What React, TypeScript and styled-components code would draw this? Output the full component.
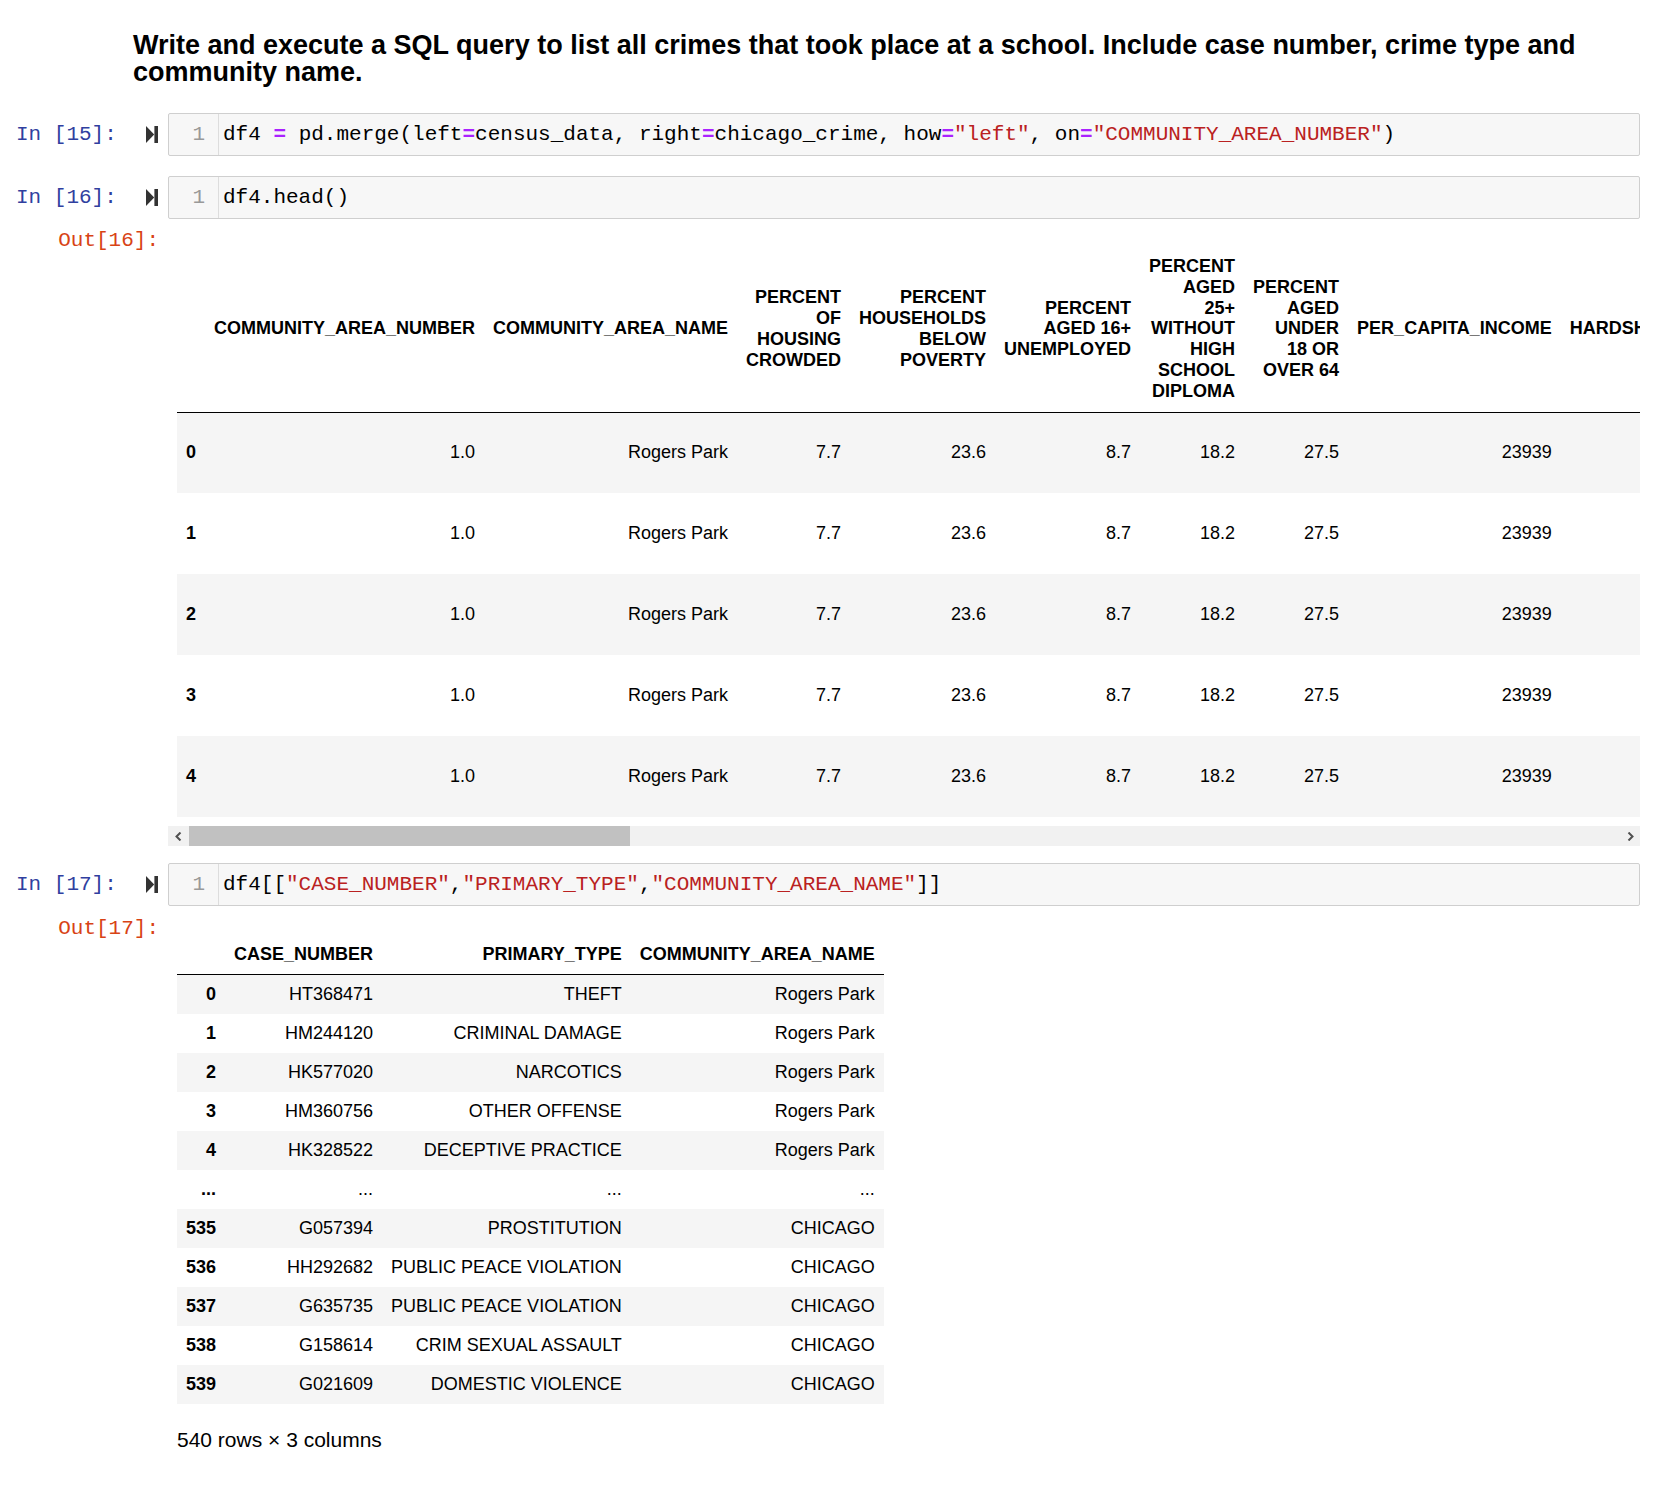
import React from "react";
import styled, { createGlobalStyle } from "styled-components";

const GlobalStyle = createGlobalStyle`
  html, body {
    margin: 0;
    padding: 0;
    background: #ffffff;
  }
  body {
    font-family: "Liberation Sans", Arial, sans-serif;
    color: #000;
  }
`;

type TokKind = "plain" | "op" | "str";
type Tok = { t: string; k?: TokKind };

const cell15: Tok[] = [
  { t: "df4 " },
  { t: "=", k: "op" },
  { t: " pd.merge(left" },
  { t: "=", k: "op" },
  { t: "census_data, right" },
  { t: "=", k: "op" },
  { t: "chicago_crime, how" },
  { t: "=", k: "op" },
  { t: '"left"', k: "str" },
  { t: ", on" },
  { t: "=", k: "op" },
  { t: '"COMMUNITY_AREA_NUMBER"', k: "str" },
  { t: ")" },
];

const cell16: Tok[] = [{ t: "df4.head()" }];

const cell17: Tok[] = [
  { t: "df4[[" },
  { t: '"CASE_NUMBER"', k: "str" },
  { t: "," },
  { t: '"PRIMARY_TYPE"', k: "str" },
  { t: "," },
  { t: '"COMMUNITY_AREA_NAME"', k: "str" },
  { t: "]]" },
];

const censusHeaders: string[][] = [
  ["COMMUNITY_AREA_NUMBER"],
  ["COMMUNITY_AREA_NAME"],
  ["PERCENT", "OF", "HOUSING", "CROWDED"],
  ["PERCENT", "HOUSEHOLDS", "BELOW", "POVERTY"],
  ["PERCENT", "AGED 16+", "UNEMPLOYED"],
  ["PERCENT", "AGED", "25+", "WITHOUT", "HIGH", "SCHOOL", "DIPLOMA"],
  ["PERCENT", "AGED", "UNDER", "18 OR", "OVER 64"],
  ["PER_CAPITA_INCOME"],
  ["HARDSHIP_INDEX"],
  ["ID"],
  ["CASE_NUMBER"],
  ["DATE"],
];

const censusRow = [
  "1.0",
  "Rogers Park",
  "7.7",
  "23.6",
  "8.7",
  "18.2",
  "27.5",
  "23939",
  "39.0",
  "1.0",
  "",
  "",
];

const censusRows = ["0", "1", "2", "3", "4"];

const crimeRows: string[][] = [
  ["0", "HT368471", "THEFT", "Rogers Park"],
  ["1", "HM244120", "CRIMINAL DAMAGE", "Rogers Park"],
  ["2", "HK577020", "NARCOTICS", "Rogers Park"],
  ["3", "HM360756", "OTHER OFFENSE", "Rogers Park"],
  ["4", "HK328522", "DECEPTIVE PRACTICE", "Rogers Park"],
  ["...", "...", "...", "..."],
  ["535", "G057394", "PROSTITUTION", "CHICAGO"],
  ["536", "HH292682", "PUBLIC PEACE VIOLATION", "CHICAGO"],
  ["537", "G635735", "PUBLIC PEACE VIOLATION", "CHICAGO"],
  ["538", "G158614", "CRIM SEXUAL ASSAULT", "CHICAGO"],
  ["539", "G021609", "DOMESTIC VIOLENCE", "CHICAGO"],
];

/* ---------- layout ---------- */

const Notebook = styled.main`
  width: 1662px;
  box-sizing: border-box;
  padding: 32px 22px 40px 0;
  display: flex;
  flex-direction: column;
`;

const MarkdownCell = styled.section`
  padding-left: 133px;
  margin-bottom: 27px;
`;

const Heading = styled.h4`
  margin: 0;
  font-family: "Liberation Sans", Arial, sans-serif;
  font-size: 27px;
  line-height: 27px;
  font-weight: 700;
  color: #000;
`;

const CellRow = styled.div<{ $gap: number }>`
  display: flex;
  align-items: flex-start;
  margin-top: ${(p) => p.$gap}px;
`;

const InPrompt = styled.div`
  width: 168px;
  flex: none;
  box-sizing: border-box;
  padding: 9px 10px 0 16px;
  display: flex;
  align-items: center;
  justify-content: space-between;
  font-family: "Liberation Mono", "Courier New", monospace;
  font-size: 21px;
  line-height: 25px;
  color: #303f9f;
  white-space: pre;
`;

const OutPrompt = styled.div`
  width: 168px;
  flex: none;
  box-sizing: border-box;
  padding-right: 9px;
  text-align: right;
  font-family: "Liberation Mono", "Courier New", monospace;
  font-size: 21px;
  line-height: 25px;
  color: #d84315;
  white-space: pre;
`;

const RunIcon = styled.svg`
  display: block;
  width: 12px;
  height: 17px;
  margin-top: -1px;
`;

const CodeBox = styled.div`
  flex: 1;
  min-width: 0;
  display: flex;
  border: 1px solid #cfcfcf;
  border-radius: 2px;
  background: #f7f7f7;
`;

const Gutter = styled.div`
  width: 50px;
  flex: none;
  box-sizing: border-box;
  padding: 8px 13px 8px 0;
  border-right: 1px solid #dddddd;
  text-align: right;
  font-family: "Liberation Mono", "Courier New", monospace;
  font-size: 21px;
  line-height: 25px;
  color: #999999;
`;

const CodeLine = styled.pre`
  margin: 0;
  padding: 8px 4px;
  font-family: "Liberation Mono", "Courier New", monospace;
  font-size: 21px;
  line-height: 25px;
  color: #000;
  white-space: pre;
`;

const TokSpan = styled.span<{ $k: TokKind }>`
  color: ${(p) => (p.$k === "op" ? "#aa22ff" : p.$k === "str" ? "#ba2121" : "#000")};
  font-weight: ${(p) => (p.$k === "op" ? 700 : 400)};
`;

const OutputArea = styled.div<{ $top: number }>`
  flex: 1;
  min-width: 0;
  display: flex;
  flex-direction: column;
  align-items: flex-start;
  padding-top: ${(p) => p.$top}px;
`;

const ScrollFrame = styled.div`
  align-self: stretch;
  display: flex;
  flex-direction: column;
`;

const Viewport = styled.div`
  overflow: hidden;
  padding: 0 0 9px 9px;
`;

const ScrollTrack = styled.div`
  height: 20px;
  display: flex;
  background: #f1f1f1;
`;

const ScrollArrow = styled.div<{ $w: number }>`
  width: ${(p) => p.$w}px;
  flex: none;
  display: flex;
  align-items: center;
  justify-content: center;
`;

const ScrollThumb = styled.div`
  width: 441px;
  flex: none;
  background: #c1c1c1;
`;

const ScrollSpacer = styled.div`
  flex: 1;
`;

const DataTable = styled.table<{ $indent: number }>`
  border-collapse: collapse;
  border-spacing: 0;
  border: none;
  margin-left: ${(p) => p.$indent}px;
  font-family: "Liberation Sans", Arial, sans-serif;
  font-size: 18px;
  color: #000;
`;

const HeadCell = styled.th<{ $lh: number; $pt: number; $pb: number }>`
  padding: ${(p) => p.$pt}px 9px ${(p) => p.$pb}px;
  text-align: right;
  vertical-align: middle;
  font-weight: 700;
  white-space: nowrap;
  line-height: ${(p) => p.$lh}px;
  border-bottom: 1px solid #000;
`;

const BodyRow = styled.tr<{ $h: number }>`
  height: ${(p) => p.$h}px;
  &:nth-child(odd) {
    background: #f5f5f5;
  }
`;

const IndexCell = styled.th`
  padding: 9px;
  text-align: right;
  vertical-align: middle;
  font-weight: 700;
  white-space: nowrap;
  line-height: 21px;
`;

const ValueCell = styled.td`
  padding: 9px;
  text-align: right;
  vertical-align: middle;
  font-weight: 400;
  white-space: nowrap;
  line-height: 21px;
`;

const Footer = styled.p`
  margin: 21px 0 0 9px;
  font-family: "Liberation Sans", Arial, sans-serif;
  font-size: 21px;
  line-height: 30px;
  color: #000;
`;

/* ---------- parts ---------- */

function StepIcon() {
  return (
    <RunIcon viewBox="0 0 12 17" aria-hidden>
      <path d="M0 0 L8.2 8.5 L0 17 Z" fill="#333" />
      <rect x="8.4" y="0" width="3.6" height="17" fill="#333" />
    </RunIcon>
  );
}

function CodeCell({ n, tokens, gap }: { n: number; tokens: Tok[]; gap: number }) {
  return (
    <CellRow $gap={gap}>
      <InPrompt>
        <span>{`In [${n}]:`}</span>
        <StepIcon />
      </InPrompt>
      <CodeBox>
        <Gutter>1</Gutter>
        <CodeLine>
          {tokens.map((tk, i) => (
            <TokSpan key={i} $k={tk.k ?? "plain"}>
              {tk.t}
            </TokSpan>
          ))}
        </CodeLine>
      </CodeBox>
    </CellRow>
  );
}

function Chevron({ dir }: { dir: "left" | "right" }) {
  const pts = dir === "left" ? "5.5,0.5 1.5,4.5 5.5,8.5" : "1.5,0.5 5.5,4.5 1.5,8.5";
  return (
    <svg width="7" height="9" viewBox="0 0 7 9" aria-hidden>
      <polyline points={pts} fill="none" stroke="#505050" strokeWidth="2" />
    </svg>
  );
}

function CensusTable() {
  return (
    <DataTable $indent={0}>
      <thead>
        <tr>
          <HeadCell $lh={20.8} $pt={8} $pb={10} />
          {censusHeaders.map((lines, i) => (
            <HeadCell key={i} $lh={20.8} $pt={8} $pb={10}>
              {lines.map((l, j) => (
                <React.Fragment key={j}>
                  {j > 0 && <br />}
                  {l}
                </React.Fragment>
              ))}
            </HeadCell>
          ))}
        </tr>
      </thead>
      <tbody>
        {censusRows.map((idx) => (
          <BodyRow key={idx} $h={81}>
            <IndexCell>{idx}</IndexCell>
            {censusRow.map((v, i) => (
              <ValueCell key={i}>{v}</ValueCell>
            ))}
          </BodyRow>
        ))}
      </tbody>
    </DataTable>
  );
}

function CrimeTable() {
  return (
    <DataTable $indent={9}>
      <thead>
        <tr>
          <HeadCell $lh={21} $pt={9} $pb={9} />
          <HeadCell $lh={21} $pt={9} $pb={9}>CASE_NUMBER</HeadCell>
          <HeadCell $lh={21} $pt={9} $pb={9}>PRIMARY_TYPE</HeadCell>
          <HeadCell $lh={21} $pt={9} $pb={9}>COMMUNITY_AREA_NAME</HeadCell>
        </tr>
      </thead>
      <tbody>
        {crimeRows.map((r, i) => (
          <BodyRow key={i} $h={39}>
            <IndexCell>{r[0]}</IndexCell>
            <ValueCell>{r[1]}</ValueCell>
            <ValueCell>{r[2]}</ValueCell>
            <ValueCell>{r[3]}</ValueCell>
          </BodyRow>
        ))}
      </tbody>
    </DataTable>
  );
}

export default function App() {
  return (
    <>
      <GlobalStyle />
      <Notebook>
        <MarkdownCell>
          <Heading>
            Write and execute a SQL query to list all crimes that took place at a school. Include case number,
            crime type and community name.
          </Heading>
        </MarkdownCell>

        <CodeCell n={15} tokens={cell15} gap={0} />
        <CodeCell n={16} tokens={cell16} gap={20} />

        <CellRow $gap={9}>
          <OutPrompt>Out[16]:</OutPrompt>
          <OutputArea $top={20}>
            <ScrollFrame>
              <Viewport>
                <CensusTable />
              </Viewport>
              <ScrollTrack>
                <ScrollArrow $w={21}>
                  <Chevron dir="left" />
                </ScrollArrow>
                <ScrollThumb />
                <ScrollSpacer />
                <ScrollArrow $w={20}>
                  <Chevron dir="right" />
                </ScrollArrow>
              </ScrollTrack>
            </ScrollFrame>
          </OutputArea>
        </CellRow>

        <CodeCell n={17} tokens={cell17} gap={17} />

        <CellRow $gap={10}>
          <OutPrompt>Out[17]:</OutPrompt>
          <OutputArea $top={19}>
            <CrimeTable />
            <Footer>540 rows × 3 columns</Footer>
          </OutputArea>
        </CellRow>
      </Notebook>
    </>
  );
}
